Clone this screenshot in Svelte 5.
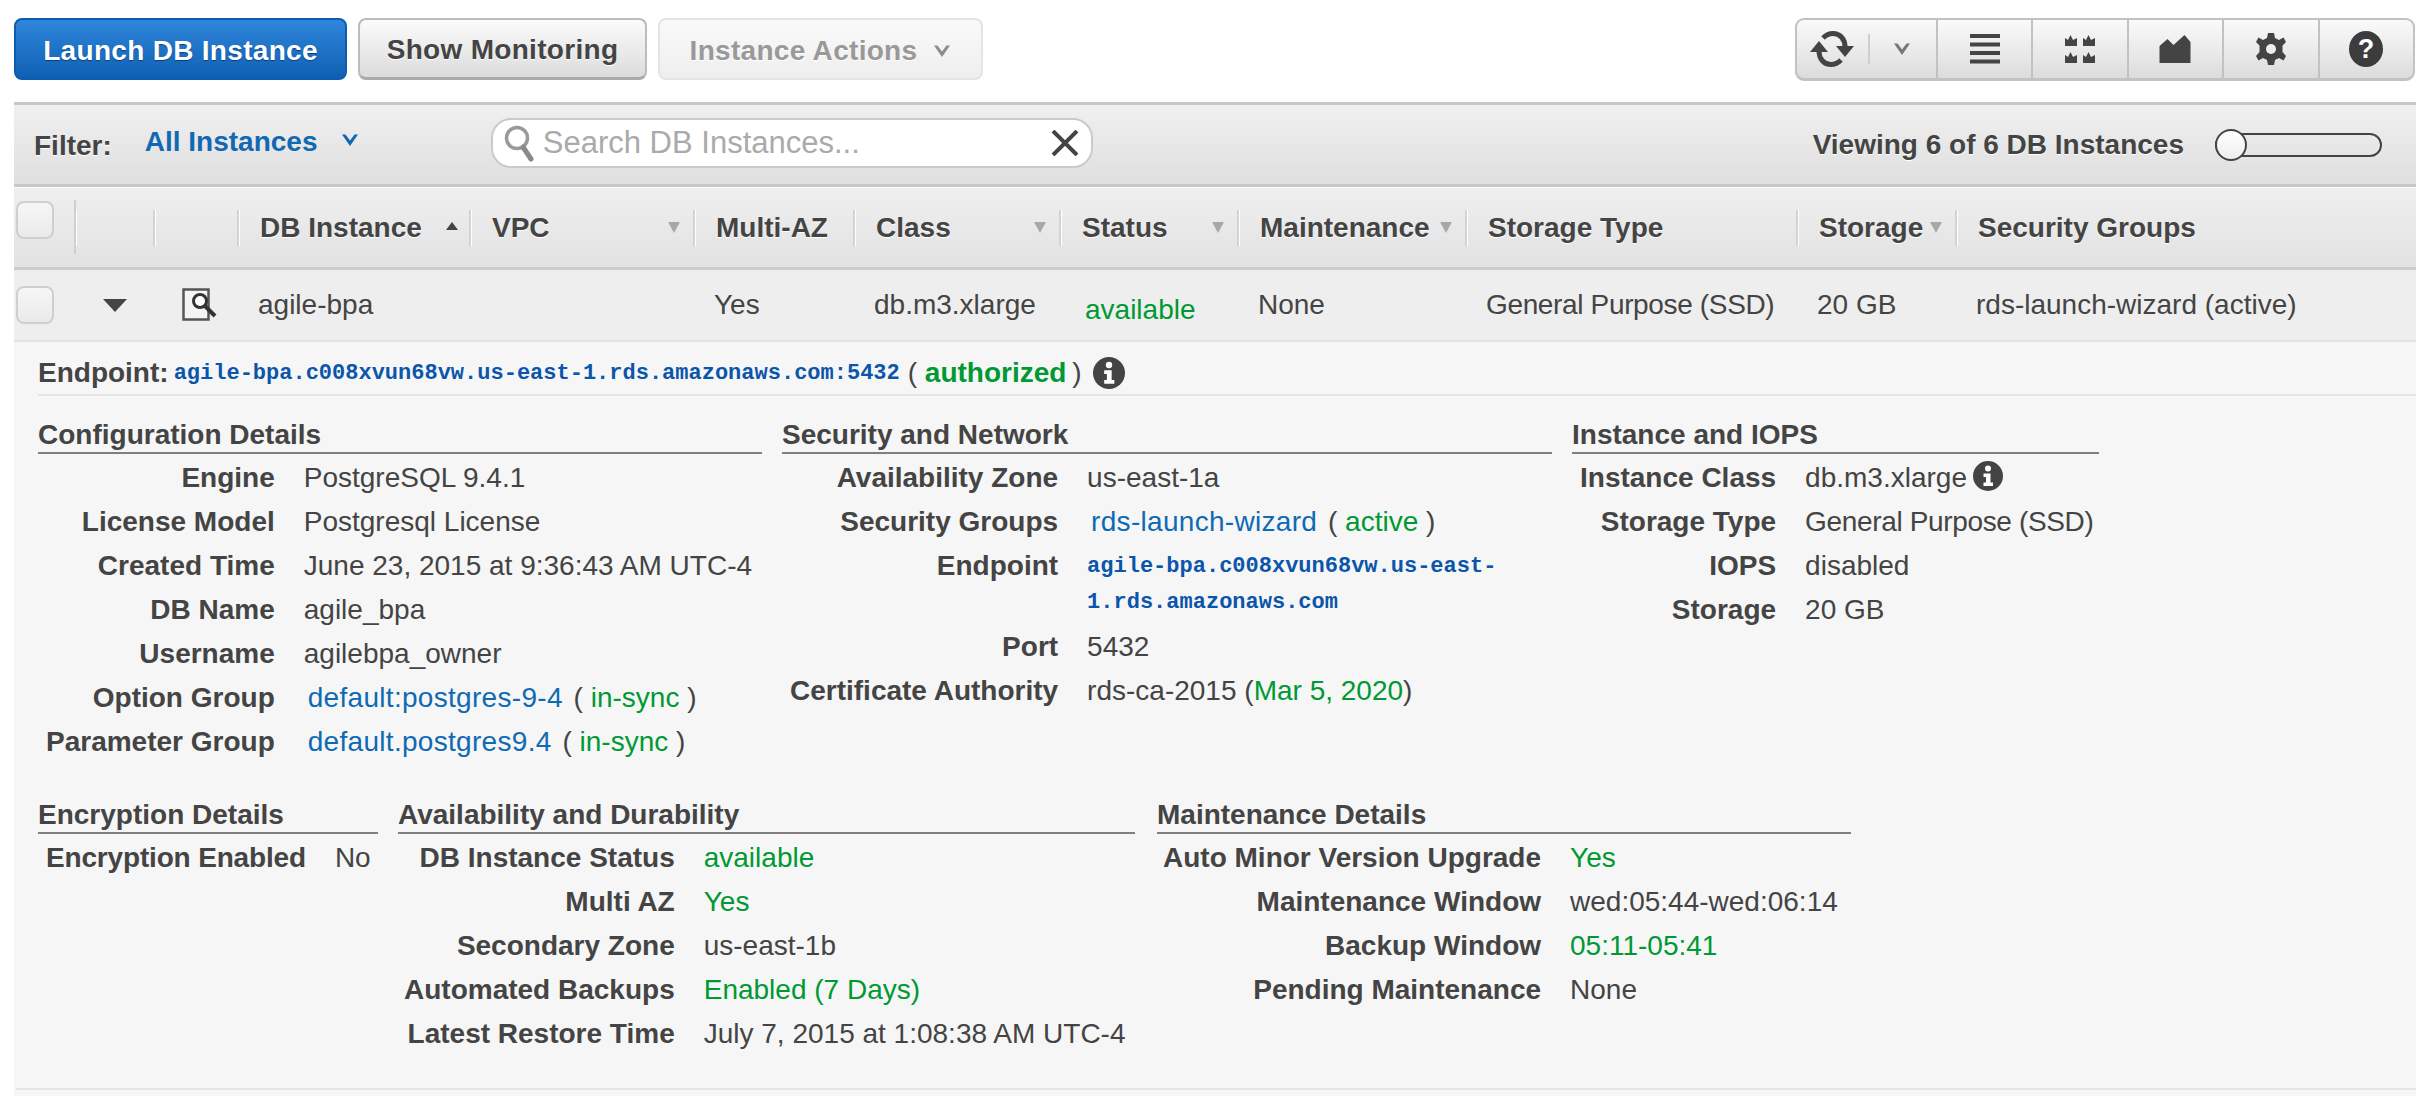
<script>
  const columns = [
    { label: "" },
    { label: "" },
    { label: "" },
    { label: "DB Instance", sort: "up" },
    { label: "VPC", sort: "down" },
    { label: "Multi-AZ" },
    { label: "Class", sort: "down" },
    { label: "Status", sort: "down" },
    { label: "Maintenance", sort: "down" },
    { label: "Storage Type" },
    { label: "Storage", sort: "down" },
    { label: "Security Groups" },
  ];

  const topSections = [
    {
      title: "Configuration Details",
      width: 724,
      rows: [
        ["Engine", "PostgreSQL 9.4.1"],
        ["License Model", "Postgresql License"],
        ["Created Time", "June 23, 2015 at 9:36:43 AM UTC-4"],
        ["DB Name", "agile_bpa"],
        ["Username", "agilebpa_owner"],
        ["Option Group", "default:postgres-9-4", "link", "in-sync"],
        ["Parameter Group", "default.postgres9.4", "link", "in-sync"],
      ],
    },
    {
      title: "Security and Network",
      width: 770,
      rows: [
        ["Availability Zone", "us-east-1a"],
        ["Security Groups", "rds-launch-wizard", "link", "active"],
        ["Endpoint", "agile-bpa.c008xvun68vw.us-east-1.rds.amazonaws.com", "mono"],
        ["Port", "5432"],
        ["Certificate Authority", "rds-ca-2015", "cert", "Mar 5, 2020"],
      ],
    },
    {
      title: "Instance and IOPS",
      width: 527,
      rows: [
        ["Instance Class", "db.m3.xlarge", "info"],
        ["Storage Type", "General Purpose (SSD)", "narrow"],
        ["IOPS", "disabled"],
        ["Storage", "20 GB"],
      ],
    },
  ];

  const bottomSections = [
    {
      title: "Encryption Details",
      width: 340,
      snug: true,
      rows: [["Encryption Enabled", "No"]],
    },
    {
      title: "Availability and Durability",
      width: 737,
      tight: true,
      rows: [
        ["DB Instance Status", "available", "green"],
        ["Multi AZ", "Yes", "green"],
        ["Secondary Zone", "us-east-1b"],
        ["Automated Backups", "Enabled (7 Days)", "green"],
        ["Latest Restore Time", "July 7, 2015 at 1:08:38 AM UTC-4"],
      ],
    },
    {
      title: "Maintenance Details",
      width: 694,
      tight: true,
      rows: [
        ["Auto Minor Version Upgrade", "Yes", "green"],
        ["Maintenance Window", "wed:05:44-wed:06:14"],
        ["Backup Window", "05:11-05:41", "green"],
        ["Pending Maintenance", "None"],
      ],
    },
  ];
</script>

{#snippet chevron(color)}
  <svg class="chev" width="18" height="14" viewBox="0 0 18 14" aria-hidden="true">
    <path d="M1 1.5 L9 13 L17 1.5 L13.5 1.5 L9 7.5 L4.5 1.5 Z" fill={color} />
  </svg>
{/snippet}

{#snippet info(size)}
  <svg width={size} height={size} viewBox="0 0 30 30" aria-hidden="true">
    <circle cx="15" cy="15" r="15" fill="#444" />
    <circle cx="15" cy="7.5" r="3" fill="#fff" />
    <path d="M10.5 12.5 H17.5 V21.5 H20 V25 H10.5 V21.5 H13 V16 H10.5 Z" fill="#fff" />
  </svg>
{/snippet}

{#snippet section(s)}
  <section class="box" style="width: {s.width}px">
    <h3>{s.title}</h3>
    <div class="kv" class:tight={s.tight} class:snug={s.snug}>
      {#each s.rows as [label, value, kind, extra]}
        <div class="k">{label}</div>
        {#if kind === "link"}
          <div class="v"><a class="lnk" href="#top">{value}</a> <span class="paren">( <span class="ok">{extra}</span> )</span></div>
        {:else if kind === "mono"}
          <div class="v mono">{value}</div>
        {:else if kind === "cert"}
          <div class="v">{value} (<span class="ok">{extra}</span>)</div>
        {:else if kind === "info"}
          <div class="v withinfo">{value} {@render info(30)}</div>
        {:else if kind === "green"}
          <div class="v ok">{value}</div>
        {:else if kind === "narrow"}
          <div class="v narrow">{value}</div>
        {:else}
          <div class="v">{value}</div>
        {/if}
      {/each}
    </div>
  </section>
{/snippet}

<div class="page">
  <div class="toolbar">
    <button class="btn primary">Launch DB Instance</button>
    <button class="btn">Show Monitoring</button>
    <button class="btn off">Instance Actions {@render chevron("#8d8d8d")}</button>
    <div class="tools">
      <div class="tool refresh">
        <svg width="46" height="40" viewBox="0 0 46 40" aria-hidden="true">
          <path d="M14 9 C17 6 20 4.500 24 4.500 C31 4.500 36 10 36 18" fill="none" stroke="#444" stroke-width="5" />
          <path d="M32 31 C29 34 26 35.500 22 35.500 C15 35.500 10 30 10 22" fill="none" stroke="#444" stroke-width="5" />
          <path d="M1 23 H19 L10 12 Z M27 17 H45 L36 28 Z" fill="#444" />
        </svg>
        <span class="inner-sep"></span>
        {@render chevron("#777")}
      </div>
      <div class="tool">
        <svg width="32" height="30" viewBox="0 0 32 30" aria-hidden="true">
          <path d="M1 0 H31 V4 H1 Z M1 8.500 H31 V12.500 H1 Z M1 17 H31 V21 H1 Z M1 25.500 H31 V29.500 H1 Z" fill="#444" />
        </svg>
      </div>
      <div class="tool">
        <svg width="32" height="30" viewBox="0 0 32 30" aria-hidden="true">
          <path d="M1 12 V4 L4 6 L6.500 1 L9 6 L13 4 V12 Z M19 12 V4 L22 6 L24.500 1 L27 6 L31 4 V12 Z M1 29 V21 L4 23 L6.500 18 L9 23 L13 21 V29 Z M19 29 V21 L22 23 L24.500 18 L27 23 L31 21 V29 Z" fill="#444" />
        </svg>
      </div>
      <div class="tool">
        <svg width="32" height="28" viewBox="0 0 32 28" aria-hidden="true">
          <path d="M0.500 28 V11 L8.500 4 L14.500 10 L25.500 0 L31.500 7 V28 Z" fill="#444" />
        </svg>
      </div>
      <div class="tool">
        <svg width="32" height="34" viewBox="0 0 32 34" aria-hidden="true">
          <path d="M13 1 H19 L20 6 L24 8 L28.500 5.500 L31 10 L27.500 13.500 V20 L31 24 L28.500 28.500 L24 26 L20 28 L19 33 H13 L12 28 L8 26 L3.500 28.500 L1 24 L4.500 20 V13.500 L1 10 L3.500 5.500 L8 8 L12 6 Z" fill="#444" />
          <circle cx="16" cy="17" r="5" fill="#eee" />
        </svg>
      </div>
      <div class="tool">
        <svg width="34" height="36" viewBox="0 0 34 36" aria-hidden="true">
          <ellipse cx="17" cy="18" rx="17" ry="18" fill="#3c3c3c" />
          <text x="17" y="27" text-anchor="middle" class="q">?</text>
        </svg>
      </div>
    </div>
  </div>

  <div class="filterbar">
    <span class="filter-label">Filter:</span>
    <span class="filter-value">All Instances {@render chevron("#1268b3")}</span>
    <div class="search">
      <svg width="38" height="38" viewBox="0 0 38 38" aria-hidden="true">
        <circle cx="15" cy="14" r="10.500" fill="none" stroke="#9a9a9a" stroke-width="3.500" />
        <path d="M21 23 L29 35" stroke="#8a8a8a" stroke-width="5" stroke-linecap="round" />
      </svg>
      <span class="placeholder">Search DB Instances...</span>
      <svg class="clear" width="28" height="26" viewBox="0 0 28 26" aria-hidden="true">
        <path d="M2 1 L26 25 M26 1 L2 25" stroke="#444" stroke-width="4" />
      </svg>
    </div>
    <span class="viewing">Viewing 6 of 6 DB Instances</span>
    <div class="slider"><span class="handle"></span></div>
  </div>

  <div class="grid head">
    {#each columns as col, i}
      <div class="th" class:first={i === 0} class:tall={i === 1}>
        {#if i === 0}
          <span class="check raised"></span>
        {:else}
          <span class="th-label">{col.label}</span>
          {#if col.sort === "up"}
            <span class="sort up"></span>
          {:else if col.sort === "down"}
            <span class="sort down"></span>
          {/if}
        {/if}
      </div>
    {/each}
  </div>

  <div class="grid row">
    <div class="td first"><span class="check"></span></div>
    <div class="td center"><span class="caret"></span></div>
    <div class="td center">
      <svg class="view-icon" width="36" height="34" viewBox="0 0 36 34" aria-hidden="true">
        <rect x="1.500" y="1.500" width="25" height="30" fill="#f4f4f4" stroke="#555" stroke-width="2.500" />
        <circle cx="18" cy="13" r="6.500" fill="#fff" stroke="#333" stroke-width="3" />
        <path d="M23 18 L33 28" stroke="#333" stroke-width="4" />
      </svg>
    </div>
    <div class="td">agile-bpa</div>
    <div class="td"></div>
    <div class="td">Yes</div>
    <div class="td">db.m3.xlarge</div>
    <div class="td ok status">available</div>
    <div class="td">None</div>
    <div class="td narrow">General Purpose (SSD)</div>
    <div class="td">20 GB</div>
    <div class="td">rds-launch-wizard (active)</div>
  </div>

  <div class="detail">
    <div class="endpoint">
      <b>Endpoint:</b>
      <a class="mono" href="#top">agile-bpa.c008xvun68vw.us-east-1.rds.amazonaws.com:5432</a>
      <span class="paren">( <b class="ok">authorized</b> )</span>
      {@render info(32)}
    </div>
    <div class="sections first-set">
      {#each topSections as s}{@render section(s)}{/each}
    </div>
    <div class="sections second-set">
      {#each bottomSections as s}{@render section(s)}{/each}
    </div>
    <div class="detail-end"></div>
  </div>
</div>

<style>
  :global(body) {
    margin: 0;
    background: #fff;
    overflow: hidden;
  }
  .page {
    box-sizing: border-box;
    width: 2424px;
    height: 1096px;
    padding: 18px 8px 0 14px;
    font-family: "Liberation Sans", Arial, sans-serif;
    font-size: 28px;
    color: #444;
    display: flex;
    flex-direction: column;
  }
  .toolbar {
    display: flex;
    gap: 11px;
    height: 63px;
    margin-bottom: 21px;
  }
  .btn {
    box-sizing: border-box;
    height: 62px;
    padding: 3px 18px 0;
    font: bold 28px "Liberation Sans", Arial, sans-serif;
    letter-spacing: 0.3px;
    color: #444;
    background: linear-gradient(#fbfbfb, #dcdcdc);
    border: 2px solid #bcbcbc;
    border-bottom: 3px solid #aaa;
    border-radius: 8px;
    text-shadow: 0 1px 0 #fff;
    display: flex;
    align-items: center;
    justify-content: center;
  }
  .primary {
    width: 333px;
    color: #fff;
    background: linear-gradient(#2f86dc, #0f60b2);
    border: 2px solid #0e5cae;
    text-shadow: 0 1px 1px #0a3f7c;
  }
  .btn:nth-child(2) {
    width: 289px;
  }
  .off {
    width: 325px;
    color: #999;
    gap: 16px;
    background: linear-gradient(#fafafa, #eeeeee);
    border: 2px solid #e4e4e4;
  }
  .tools {
    margin-left: auto;
    margin-right: 1px;
    box-sizing: border-box;
    width: 620px;
    height: 63px;
    display: grid;
    grid-template-columns: 139px repeat(5, 1fr);
    background: linear-gradient(#fafafa, #dcdcdc);
    border: 2px solid #c2c2c2;
    border-bottom-width: 3px;
    border-radius: 9px;
  }
  .tool {
    display: flex;
    align-items: center;
    justify-content: center;
    border-left: 2px solid #c2c2c2;
  }
  .tool:first-child {
    border-left: 0;
    justify-content: flex-start;
  }
  .refresh {
    padding-left: 12px;
    gap: 13px;
  }
  .inner-sep {
    width: 2px;
    height: 30px;
    background: #cfcfcf;
  }
  .refresh .chev {
    margin-left: 10px;
  }
  .q {
    font: bold 27px "Liberation Sans", Arial, sans-serif;
    fill: #fff;
  }
  .filterbar {
    box-sizing: border-box;
    height: 85px;
    display: flex;
    align-items: center;
    background: linear-gradient(#f0f0f0, #dfdfdf);
    border-top: 3px solid #c8c8c8;
    border-bottom: 3px solid #c8c8c8;
  }
  .filter-label {
    font-weight: bold;
    margin-left: 20px;
    margin-top: 2px;
    text-shadow: 0 1px 0 #fff;
  }
  .filter-value {
    font-weight: bold;
    color: #1268b3;
    margin-left: 33px;
    margin-top: -6px;
    width: 346px;
    display: flex;
    align-items: center;
    gap: 23px;
    white-space: nowrap;
  }
  .filter-value .chev {
    margin-top: -4px;
  }
  .search {
    box-sizing: border-box;
    width: 602px;
    height: 50px;
    margin-top: -3px;
    display: flex;
    align-items: center;
    padding: 0 12px 0 9px;
    background: #fff;
    border: 2px solid #cacaca;
    border-radius: 20px;
  }
  .placeholder {
    font-size: 31px;
    color: #aaa;
    margin-left: 3px;
    flex: 1;
  }
  .viewing {
    font-weight: bold;
    margin-left: auto;
    text-shadow: 0 1px 0 #fff;
  }
  .slider {
    position: relative;
    box-sizing: border-box;
    width: 167px;
    height: 24px;
    margin: 0 34px 0 31px;
    background: transparent;
    border: 2px solid #444;
    border-radius: 12px;
  }
  .handle {
    position: absolute;
    left: -2px;
    top: -6px;
    box-sizing: border-box;
    width: 32px;
    height: 32px;
    background: linear-gradient(#fff, #eee);
    border: 2px solid #444;
    border-radius: 16px;
  }
  .grid {
    display: grid;
    grid-template-columns: 61px 79px 84px 232px 224px 160px 206px 178px 228px 331px 159px 460px;
  }
  .head {
    box-sizing: border-box;
    height: 82px;
    margin-top: 1px;
    align-items: center;
    background: linear-gradient(#efefef, #e2e2e2);
    border-bottom: 3px solid #cccccc;
  }
  .th {
    box-sizing: border-box;
    height: 36px;
    margin-left: -1px;
    padding: 0 14px 0 21px;
    display: flex;
    align-items: center;
    justify-content: space-between;
    font-weight: bold;
    border-left: 2px solid #d3d3d3;
    box-shadow: inset 1px 0 0 #fff;
    white-space: nowrap;
    text-shadow: 0 1px 0 #fff;
  }
  .th.first {
    margin-left: 0;
    border-left: 0;
    box-shadow: none;
    padding: 0 0 0 2px;
    height: 38px;
    margin-top: -16px;
  }
  .th.tall {
    position: relative;
  }
  .th.tall::before {
    content: "";
    position: absolute;
    left: -2px;
    top: -10px;
    bottom: -8px;
    width: 2px;
    background: #cfcfcf;
  }
  .sort {
    width: 0;
    height: 0;
    border-left: 6px solid transparent;
    border-right: 6px solid transparent;
  }
  .sort.up {
    border-bottom: 8px solid #444;
    margin-top: -4px;
    margin-right: -2px;
  }
  .sort.down {
    border-top: 11px solid #a8a8a8;
  }
  .check {
    display: block;
    box-sizing: border-box;
    width: 38px;
    height: 38px;
    background: linear-gradient(#f6f6f6, #eaeaea);
    border: 2px solid #cfcfcf;
    border-radius: 8px;
  }
  .row {
    box-sizing: border-box;
    height: 72px;
    background: #eeeeee;
    border-bottom: 2px solid #dfe4ea;
    align-items: center;
    white-space: nowrap;
  }
  .td {
    padding-left: 20px;
  }
  .td.first {
    padding-left: 2px;
  }
  .td.center {
    padding-left: 0;
    display: flex;
    justify-content: center;
  }
  .view-icon {
    margin-left: 7px;
  }
  .status {
    padding-left: 25px;
    margin-top: 10px;
  }
  .narrow {
    letter-spacing: -0.35px;
  }
  .caret {
    width: 0;
    height: 0;
    border-left: 12px solid transparent;
    border-right: 12px solid transparent;
    border-top: 13px solid #444;
  }
  .ok {
    color: #009933;
  }
  .detail {
    flex: 1;
    background: #f6f6f6;
  }
  .endpoint {
    box-sizing: border-box;
    height: 54px;
    margin-left: 24px;
    border-bottom: 2px solid #e4e4e4;
    display: flex;
    align-items: center;
    gap: 7px;
    padding-top: 10px;
    white-space: nowrap;
  }
  .endpoint b:first-child {
    margin-right: -2px;
  }
  .endpoint .paren {
    margin-left: 1px;
    margin-right: 4px;
  }
  .mono {
    font-family: "Liberation Mono", "Courier New", monospace;
    font-size: 22px;
    font-weight: bold;
    color: #0b55ab;
    text-decoration: none;
  }
  .sections {
    display: flex;
    gap: 20px;
    margin-left: 24px;
  }
  .first-set {
    margin-top: 18px;
  }
  .second-set {
    margin-top: 30px;
  }
  .second-set .box:last-child {
    margin-left: 2px;
  }
  .box {
    flex: none;
  }
  h3 {
    box-sizing: border-box;
    height: 40px;
    margin: 0 0 2px;
    font-size: 28px;
    line-height: 42px;
    font-weight: bold;
    border-bottom: 2px solid #808080;
  }
  .kv {
    display: grid;
    grid-template-columns: max-content 1fr;
    column-gap: 29px;
    padding: 0 8px;
    line-height: 44px;
  }
  .kv.tight {
    padding: 0 6px;
  }
  .kv.snug .k {
    letter-spacing: -0.17px;
  }
  .k {
    font-weight: bold;
    text-align: right;
    white-space: nowrap;
  }
  .v {
    min-width: 0;
    white-space: nowrap;
  }
  .lnk {
    color: #0f6ab4;
    text-decoration: none;
    letter-spacing: 0.3px;
    margin-left: 4px;
    margin-right: 3px;
  }
  .v.mono {
    white-space: normal;
    line-height: 36px;
    padding: 5px 0 4px;
  }
  .withinfo {
    display: flex;
    align-items: center;
    gap: 6px;
  }
  .withinfo svg {
    margin-top: -5px;
  }
  .detail-end {
    margin-top: 32px;
    margin-left: 2px;
    height: 2px;
    background: #e4e4e4;
  }
</style>
